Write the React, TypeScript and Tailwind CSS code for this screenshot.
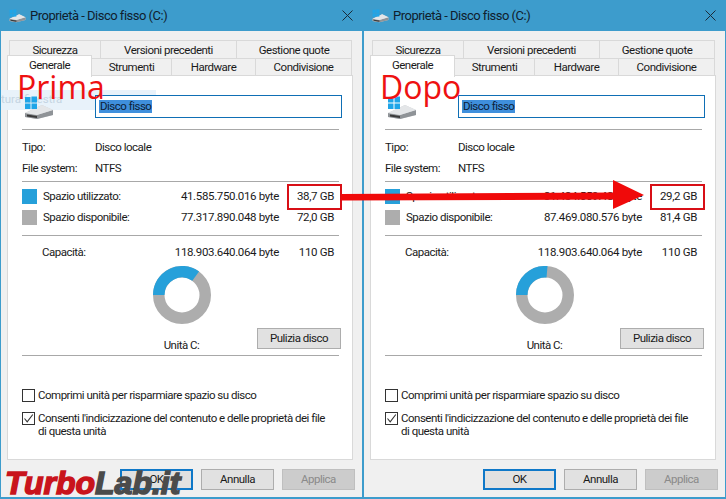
import React from "react";

const BODY_FONT = "font-['Roboto','Noto_Sans',sans-serif]";

function DiskIcon({ small = false }: { small?: boolean }) {
  return (
    <svg viewBox="0 0 30 24" className={small ? "w-[17px] h-[14px]" : "w-[30px] h-[24px]"}>
      <path d="M1 17 L18 9 L29 14 L29 19 L13 23 L1 21 Z" fill="#c9ccd0" />
      <path d="M1 17 L13 19 L29 14 L29 19 L13 23 L1 21 Z" fill="#8f9397" />
      <path d="M3 18.5 L13 20 L13 22 L3 20.5 Z" fill="#3a3a3a" />
      <path d="M18 9 L29 14 L13 19 L1 17 Z" fill="#e4e6e8" />
      <rect x="1" y="1" width="5.5" height="5.5" fill="#1fa5e8" />
      <rect x="7.5" y="0.5" width="5.5" height="6" fill="#1fa5e8" />
      <rect x="1" y="7.5" width="5.5" height="5.5" fill="#1fa5e8" />
      <rect x="7.5" y="7.5" width="5.5" height="5.5" fill="#1fa5e8" />
    </svg>
  );
}

function Donut({ usedDeg }: { usedDeg: number }) {
  // used slice runs clockwise and starts at 9 o'clock
  const start = 270;
  const end = start + usedDeg;
  const pt = (deg: number, r: number) => {
    const a = (deg * Math.PI) / 180;
    return `${29 + r * Math.sin(a)} ${29 - r * Math.cos(a)}`;
  };
  return (
    <svg viewBox="0 0 58 58" className="w-[58px] h-[58px]">
      <circle cx="29" cy="29" r="23.25" fill="none" stroke="#adadad" strokeWidth="11.5" />
      <path
        d={`M ${pt(start, 23.25)} A 23.25 23.25 0 0 1 ${pt(end, 23.25)}`}
        fill="none"
        stroke="#26a0da"
        strokeWidth="11.5"
      />
    </svg>
  );
}

function Separator({ className }: { className: string }) {
  return <div className={`h-px bg-[#a8a8a8] mr-[2px] ${className}`} />;
}

function Tab({ label, w }: { label: string; w: string }) {
  return (
    <div className={`${w} h-full pt-[2px] flex items-center justify-center border border-[#d9d9d9] -ml-px bg-[#f0f0f0] text-[#1a1a1a]`}>
      {label}
    </div>
  );
}

function Check({ checked }: { checked?: boolean }) {
  return (
    <span className="w-[13px] h-[13px] shrink-0 border border-[#333] bg-white flex items-center justify-center">
      {checked && (
        <svg viewBox="0 0 11 11" className="w-[11px] h-[11px]">
          <path d="M1.5 5.5 L4.2 8.8 L9.8 1.5" fill="none" stroke="#333" strokeWidth="1.1" />
        </svg>
      )}
    </span>
  );
}

function DialogButton({ label, primary, disabled }: { label: string; primary?: boolean; disabled?: boolean }) {
  return (
    <div
      className={`w-[73px] h-[21px] flex items-center justify-center ${
        primary
          ? "border-2 border-[#0f78c8] bg-[#e1e1e1] text-[#1a1a1a]"
          : disabled
            ? "border border-[#bfbfbf] bg-[#cccccc] text-[#8a8a8a]"
            : "border border-[#adadad] bg-[#e1e1e1] text-[#1a1a1a]"
      }`}
    >
      {label}
    </div>
  );
}

type WindowProps = {
  used: string;
  usedGb: string;
  free: string;
  freeGb: string;
  usedDeg: number;
  label: string;
  ghost?: boolean;
};

function DiskWindow({ used, usedGb, free, freeGb, usedDeg, label, ghost }: WindowProps) {
  return (
    <div className={`relative w-[363px] h-[499px] shrink-0 flex flex-col border-x border-b-2 border-[#3d9ccc] bg-[#f0f0f0] text-[11.5px] leading-none tracking-[-0.5px] text-[#1a1a1a] ${BODY_FONT}`}>
      {/* Title bar */}
      <div className="-mx-px h-[31px] shrink-0 bg-[#3d9ccc] flex items-center pl-[9px] pr-[10px]">
        <DiskIcon small />
        <span className="ml-[4px] text-[13px] text-[#10202c] tracking-[-0.5px]">Proprietà - Disco fisso (C:)</span>
        <svg viewBox="0 0 11 11" className="ml-auto w-[11px] h-[11px]">
          <path d="M0.5 0.5 L10.5 10.5 M10.5 0.5 L0.5 10.5" stroke="#1a2b38" strokeWidth="1" />
        </svg>
      </div>

      {/* Tabs */}
      <div className="pt-[9px] pl-[9px] h-[27px] shrink-0 flex">
        <div className="flex h-[19px]">
          <Tab label="Sicurezza" w="w-[92px]" />
          <Tab label="Versioni precedenti" w="w-[137px]" />
          <Tab label="Gestione quote" w="w-[116px]" />
        </div>
      </div>
      <div className="h-[18px] shrink-0 flex pl-[6px]">
        <div className="relative z-10 w-[85px] h-[22px] -mt-[3px] pb-[2px] flex items-center justify-center border border-b-0 border-[#d9d9d9] bg-white">
          Generale
        </div>
        <Tab label="Strumenti" w="w-[81px]" />
        <Tab label="Hardware" w="w-[85px]" />
        <Tab label="Condivisione" w="w-[97px]" />
      </div>

      {/* Panel */}
      <div className="ml-[6px] w-[346px] h-[385px] -mt-px border border-[#d9d9d9] bg-white pl-[14px] pr-[11px] flex flex-col">
        <div className="relative z-20 mt-[19px] h-[23px] flex">
          <div className="w-[73px] pl-[2px] pt-px">
            <DiskIcon />
          </div>
          <div className="flex-1 -mr-[1px] border border-[#0f6fb5] bg-white flex items-center pl-[3px]">
            <span className="bg-[#3f8fdc] text-[#0d2036] px-px py-px">Disco fisso</span>
          </div>
        </div>
        <Separator className="mt-[11px]" />

        <div className="mt-[10px] h-4 flex items-center">
          <span className="w-[73px]">Tipo:</span>
          <span>Disco locale</span>
        </div>
        <div className="mt-[5px] h-4 flex items-center">
          <span className="w-[73px]">File system:</span>
          <span>NTFS</span>
        </div>
        <Separator className="mt-[4px]" />

        <div className="mt-[7px] h-[15px] flex items-center">
          <span className="w-[15px] h-[15px] bg-[#26a0da] mr-[6px]" />
          <span>Spazio utilizzato:</span>
          <span className="ml-auto tracking-[-0.35px]">{used} byte</span>
          <span className="w-[62px] pr-[7px] text-right tracking-[-0.35px]">{usedGb}</span>
        </div>
        <div className="mt-[6px] h-[15px] flex items-center">
          <span className="w-[15px] h-[15px] bg-[#adadad] mr-[6px]" />
          <span className="mt-px">Spazio disponibile:</span>
          <span className="ml-auto mt-px tracking-[-0.35px]">{free} byte</span>
          <span className="w-[62px] mt-px pr-[7px] text-right tracking-[-0.35px]">{freeGb}</span>
        </div>
        <Separator className="mt-[10px]" />

        <div className="mt-[9px] h-4 flex items-center">
          <span className="ml-[20px]">Capacità:</span>
          <span className="ml-auto tracking-[-0.35px]">118.903.640.064 byte</span>
          <span className="w-[62px] pr-[7px] text-right tracking-[-0.35px]">110 GB</span>
        </div>

        <div className="mt-[5px] h-[89px] grid grid-cols-[1fr_58px_1fr]">
          <div />
          <div className="flex flex-col items-center">
            <Donut usedDeg={usedDeg} />
            <span className="mt-[16px] whitespace-nowrap">Unità C:</span>
          </div>
          <div className="flex items-end justify-end">
            <div className="w-[84px] h-[21px] mb-[6px] border border-[#adadad] bg-[#e1e1e1] flex items-center justify-center">
              Pulizia disco
            </div>
          </div>
        </div>
        <Separator className="mt-0" />

        <div className="mt-[33px] flex items-center gap-[3px]">
          <Check />
          <span>Comprimi unità per risparmiare spazio su disco</span>
        </div>
        <div className="mt-[10px] flex items-start gap-[3px]">
          <Check checked />
          <span className="leading-[13px] whitespace-nowrap">
            Consenti l'indicizzazione del contenuto e delle proprietà dei file
            <br />
            di questa unità
          </span>
        </div>
      </div>

      {/* Footer buttons */}
      <div className="mt-[9px] pl-[119px] flex gap-[8px]">
        <DialogButton label="OK" primary />
        <DialogButton label="Annulla" />
        <DialogButton label="Applica" disabled />
      </div>

      {ghost && (
        <div className="absolute z-[5] left-0 top-[90px] w-[155px] h-[20px] bg-[#e8f2fa] flex items-center tracking-normal text-[#c5d5e2]">
          tura finestra
        </div>
      )}

      {/* Annotation over the screenshot */}
      <span className="absolute z-30 left-[16px] top-[67px] font-['Open_Sans',sans-serif] text-[32px] leading-[40px] tracking-normal text-[#ee1111]">
        {label}
      </span>
      <div className="absolute z-30 left-[286px] top-[184px] w-[55px] h-[26px] border-2 border-[#d80f16]" />
    </div>
  );
}

export default function App() {
  return (
    <div className="relative w-[726px] h-[499px] flex overflow-hidden bg-white">
      <DiskWindow
        used="41.585.750.016"
        usedGb="38,7 GB"
        free="77.317.890.048"
        freeGb="72,0 GB"
        usedDeg={126}
        label="Prima"
        ghost
      />
      <DiskWindow
        used="31.434.559.488"
        usedGb="29,2 GB"
        free="87.469.080.576"
        freeGb="81,4 GB"
        usedDeg={95}
        label="Dopo"
      />

      <svg viewBox="0 0 726 499" className="absolute z-40 inset-0 w-[726px] h-[499px] pointer-events-none">
        <path d="M341 194 L613 192.5 L613 180 L644 195 L613 209 L613 199.5 L341 200.5 Z" fill="#f00a0a" />
      </svg>

      <div className="absolute z-50 left-[5px] bottom-0 text-[32px] leading-[32px] italic font-bold font-['Liberation_Sans',sans-serif] [-webkit-text-stroke:1.5px_currentColor] whitespace-nowrap">
        <span className="text-[#c9141c]">Turbo</span>
        <span className="text-[#4b4b4b]">Lab.it</span>
      </div>
    </div>
  );
}
